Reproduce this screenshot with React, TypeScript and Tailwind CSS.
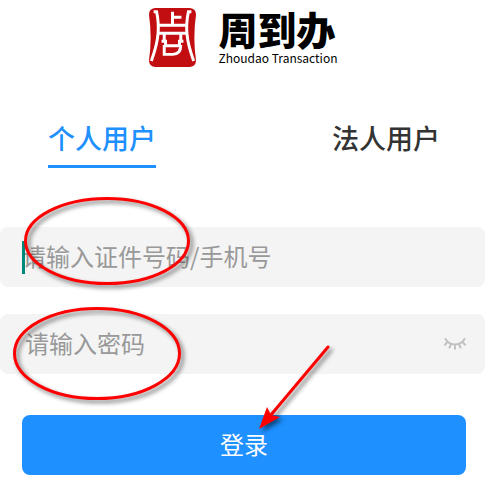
import { useState } from "react";

type UserType = "personal" | "legal";

interface Tab {
  id: UserType;
  label: string;
}

const tabs: Tab[] = [
  { id: "personal", label: "个人用户" },
  { id: "legal", label: "法人用户" },
];

const LogoMark = () => (
  <svg className="h-[59px] w-[47px]" viewBox="0 0 142 178" aria-hidden="true">
    <path
      d="M18 0H124Q142 2 142 20Q132 90 142 158Q142 176 124 178H18Q0 176 0 158Q10 90 0 20Q0 2 18 0Z"
      fill="#c20d11"
    />
    <g fill="none" stroke="#fff" strokeWidth="9">
      <path d="M14 11H23C32 55 31 95 7 160" />
      <path d="M128 11H119C110 55 111 95 135 160" />
      <path d="M71 11V54M71 28H98M29 52H113M29 76H113" />
      <path d="M46 76V100M96 76V100" />
      <path d="M38 100H50V114H92V100H104" />
      <path d="M46 112V140H72Q96 140 96 112" />
    </g>
  </svg>
);

const ClosedEye = () => (
  <svg
    className="h-3 w-[22px]"
    viewBox="0 0 22 12"
    fill="none"
    stroke="#c0c0c0"
    strokeWidth="2"
    strokeLinecap="round"
    aria-hidden="true"
  >
    <path d="M1.5 1Q5 6.5 11 6.5T20.5 1M3.3 4L1 6.8M7 6.2L5.5 9.5M11 6.8V10.7M15 6.2L16.5 9.5M18.7 4L21 6.8" />
  </svg>
);

const Annotations = () => (
  <svg
    className="pointer-events-none absolute top-0 left-0 h-[487px] w-[485px] drop-shadow-[3px_3px_2px_rgba(0,0,0,0.5)]"
    viewBox="0 0 485 487"
    aria-hidden="true"
  >
    <g fill="none" stroke="#f00" strokeWidth="3">
      <ellipse cx="107" cy="241" rx="81.5" ry="42.5" />
      <ellipse cx="97" cy="353.5" rx="82.5" ry="45" />
      <path d="M328 347L270 416" strokeLinecap="round" />
    </g>
    <path d="M259 429L267 407L271 415L280 417Z" fill="#f00" />
  </svg>
);

const App = () => {
  const [userType, setUserType] = useState<UserType>("personal");

  return (
    <main className="relative min-h-screen overflow-hidden bg-white font-['Noto_Sans_CJK_SC',sans-serif]">
      {/* Logo */}
      <header className="flex justify-center gap-[23px] pt-2 pl-px">
        <LogoMark />
        <div className="flex flex-col text-black">
          <h1 className="text-[39px] leading-10 font-black">周到办</h1>
          <p className="text-[12px] leading-5">Zhoudao Transaction</p>
        </div>
      </header>

      {/* User type */}
      <nav className="mt-[49px] flex justify-between pr-[45px] pl-12">
        {tabs.map((tab) => (
          <button
            key={tab.id}
            type="button"
            onClick={() => setUserType(tab.id)}
            className={
              userType === tab.id
                ? "border-b-3 border-[#1e90ff] pb-1.5 text-[27px] leading-[42px] font-medium text-[#1e90ff]"
                : "border-b-3 border-transparent pb-1.5 text-[27px] leading-[42px] font-medium text-[#333]"
            }
          >
            {tab.label}
          </button>
        ))}
      </nav>

      <form className="mt-[59px]" onSubmit={(e) => e.preventDefault()}>
        <div className="relative flex h-[60px] items-center rounded-lg bg-[#f4f4f4] px-[22px]">
          <input
            type="text"
            aria-label="证件号码/手机号"
            placeholder="请输入证件号码/手机号"
            className="h-full w-full bg-transparent pb-1 text-2xl text-[#333] outline-none placeholder:text-[#999]"
          />
          <span className="absolute left-[22px] h-[33px] w-[3px] bg-[#00897b]" />
        </div>

        <div className="mt-[27px] flex h-[60px] items-center rounded-lg bg-[#f4f4f4] pr-[19px] pl-[25px]">
          <input
            type="password"
            aria-label="密码"
            placeholder="请输入密码"
            className="h-full min-w-0 flex-1 bg-transparent pb-1 text-2xl text-[#333] outline-none placeholder:text-[#999]"
          />
          <button type="button" aria-label="显示密码">
            <ClosedEye />
          </button>
        </div>

        <div className="mt-[41px] pr-[19px] pl-[22px]">
          <button
            type="submit"
            className="h-[60px] w-full rounded-lg bg-[#1e90ff] pb-0.5 text-2xl text-white"
          >
            登录
          </button>
        </div>
      </form>

      <Annotations />
    </main>
  );
};

export default App;
